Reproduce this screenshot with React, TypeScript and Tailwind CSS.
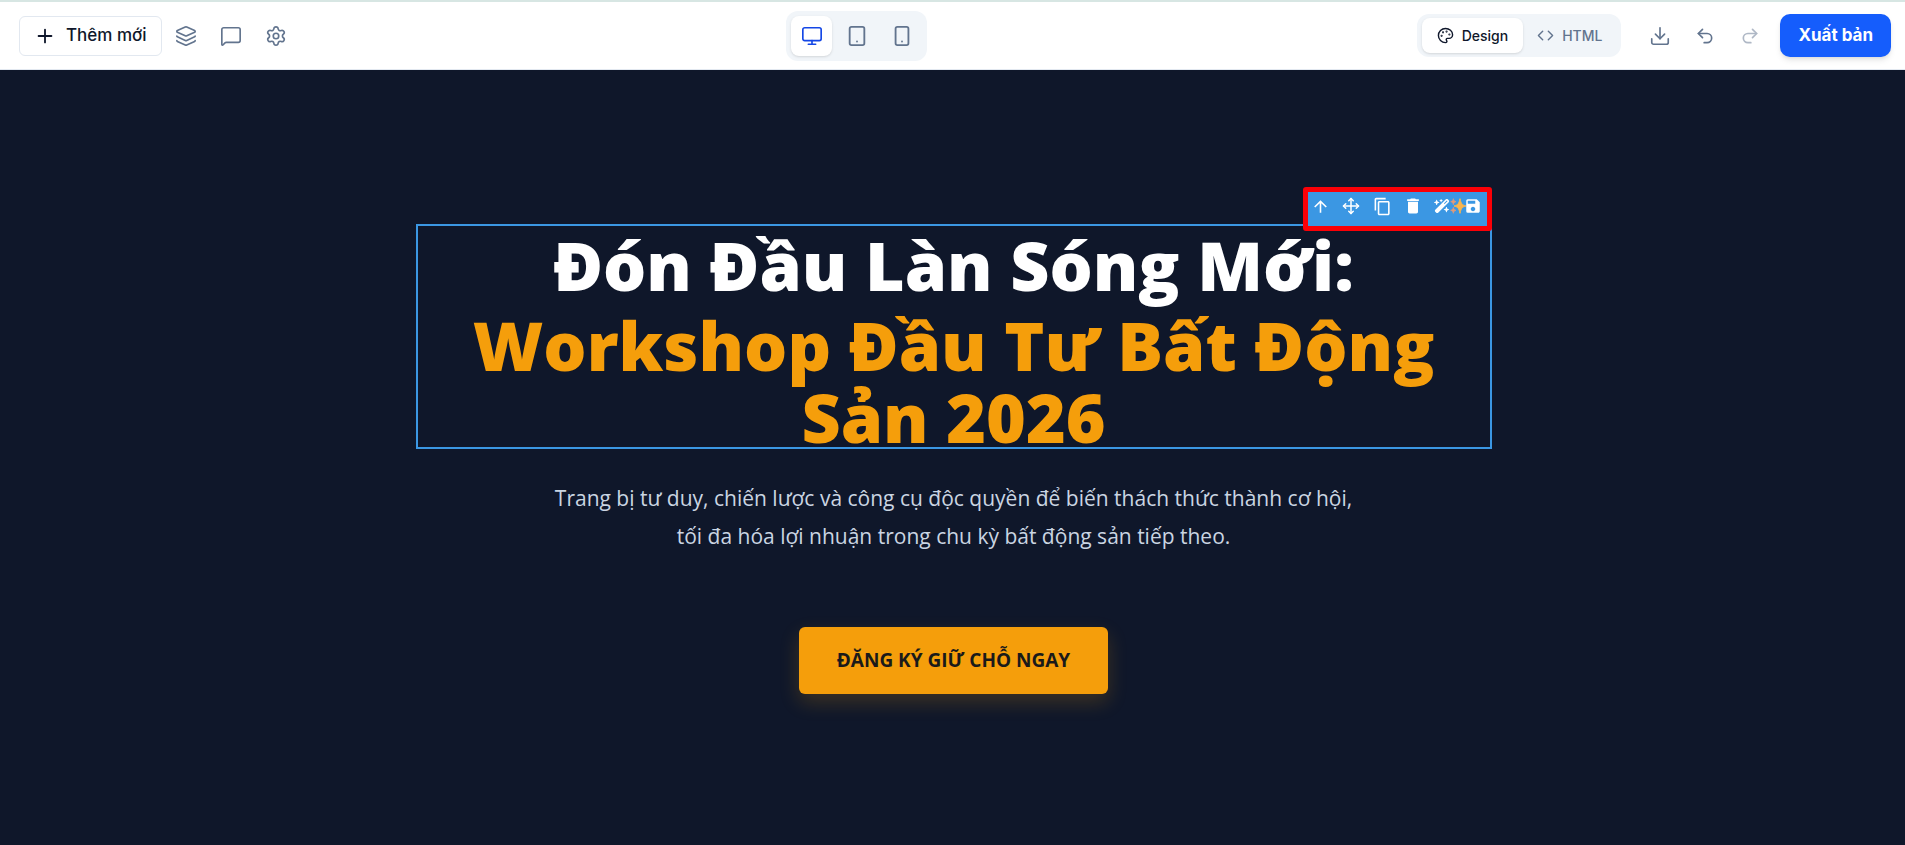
import type { ReactNode } from "react";
import {
  Code,
  Download,
  Layers,
  MessageSquare,
  Monitor,
  Move,
  Palette,
  Plus,
  Redo2,
  Settings,
  Tablet,
  Undo2,
} from "lucide-react";
import { FaWandMagicSparkles } from "react-icons/fa6";
import { MdArrowUpward, MdContentCopy, MdDelete, MdSave } from "react-icons/md";

function IconButton({ label, className = "text-slate-500", children }: { label: string; className?: string; children: ReactNode }) {
  return (
    <button type="button" aria-label={label} className={`flex h-10 w-[41px] items-center justify-center ${className}`}>
      {children}
    </button>
  );
}

function Sparkles() {
  return (
    <svg viewBox="0 0 24 24" className="h-4 w-4 shrink-0" aria-hidden="true">
      <path d="M15 1c1.700 7.500 3 9.500 9 11-6 1.500-7.300 3.500-9 11-1.700-7.500-3-9.500-9-11 6-1.500 7.300-3.500 9-11z" fill="#fbb54c" stroke="#fbb54c" strokeWidth="1.500" />
      <path d="M5 1c.8 3 1.200 3.500 4 4.500-2.800 1-3.200 1.500-4 4.500-.8-3-1.200-3.500-4-4.500C3.800 4.500 4.200 4 5 1z" fill="#e39a78" stroke="#e39a78" />
      <path d="M5 14c.8 3 1.200 3.500 4 4.500-2.800 1-3.200 1.500-4 4.500-.8-3-1.200-3.500-4-4.500 2.800-1 3.200-1.500 4-4.500z" fill="#e39a78" stroke="#e39a78" />
    </svg>
  );
}

function TopBar() {
  return (
    <header className="flex h-[68px] items-center justify-between border-b border-slate-200 bg-white pr-[14px] pl-[19px] font-['Inter',sans-serif]">
      <div className="flex items-center gap-1">
        <button type="button" className="flex h-10 items-center gap-[10px] rounded-md border border-slate-200 px-[14px] text-[17px] font-medium text-slate-900">
          <Plus size={22} strokeWidth={2} />
          Thêm mới
        </button>
        <IconButton label="Lớp"><Layers size={22} strokeWidth={1.8} /></IconButton>
        <IconButton label="Bình luận"><MessageSquare size={22} strokeWidth={1.8} /></IconButton>
        <IconButton label="Cài đặt"><Settings size={22} strokeWidth={1.8} /></IconButton>
      </div>

      <div className="flex items-center gap-1 rounded-xl bg-slate-100 p-[5px]">
        <IconButton label="Máy tính" className="rounded-lg bg-white text-blue-700 shadow"><Monitor size={22} strokeWidth={1.8} /></IconButton>
        <IconButton label="Máy tính bảng"><Tablet size={22} strokeWidth={2} /></IconButton>
        <IconButton label="Điện thoại">
          <svg viewBox="0 0 24 24" className="h-[22px] w-[22px]" fill="none" stroke="currentColor" strokeWidth="2" strokeLinecap="round" aria-hidden="true">
            <rect x="5" y="2" width="14" height="20" rx="2" />
            <path d="M12 18h.01" />
          </svg>
        </IconButton>
      </div>

      <div className="flex items-center">
        <div className="flex items-center rounded-xl bg-slate-100 px-[5px] py-1 text-sm font-medium">
          <button type="button" className="flex h-[35px] items-center gap-2 rounded-lg bg-white px-[15px] text-slate-900 shadow">
            <Palette size={17} strokeWidth={2} />
            Design
          </button>
          <button type="button" className="flex h-[35px] items-center gap-2 px-[14px] text-slate-500">
            <Code size={17} strokeWidth={2} />
            HTML
          </button>
        </div>
        <div className="flex items-center gap-1 pr-[10px] pl-[18px]">
          <IconButton label="Tải xuống"><Download size={22} strokeWidth={1.8} /></IconButton>
          <IconButton label="Hoàn tác"><Undo2 size={20} strokeWidth={2} /></IconButton>
          <IconButton label="Làm lại" className="text-slate-500 opacity-50"><Redo2 size={20} strokeWidth={2} /></IconButton>
        </div>
        <button type="button" className="h-[43px] rounded-[10px] bg-[#155dfc] px-[18px] text-[17px] font-bold text-white shadow-md">
          Xuất bản
        </button>
      </div>
    </header>
  );
}

const tools = [
  { label: "Chọn phần tử cha", icon: <MdArrowUpward size={19} /> },
  { label: "Di chuyển", icon: <Move size={18} strokeWidth={2} /> },
  { label: "Nhân bản", icon: <MdContentCopy size={19} /> },
  { label: "Xóa", icon: <MdDelete size={20} /> },
];

function ElementToolbar() {
  return (
    <div className="absolute right-0 bottom-full -mb-[7px] flex h-11 w-[189px] items-start gap-2 rounded-[3px] border-[5px] border-[#fb0007] bg-[#3b97e3] pt-1 pl-px text-white">
      {tools.map((tool) => (
        <button key={tool.label} type="button" aria-label={tool.label} className="flex h-5 w-[23px] items-center justify-center">
          {tool.icon}
        </button>
      ))}
      <div className="flex">
        <button type="button" aria-label="Chỉnh sửa bằng AI" className="flex h-5 items-center pl-px">
          <FaWandMagicSparkles size={16} />
          <Sparkles />
        </button>
        <button type="button" aria-label="Lưu" className="-ml-[2px] flex h-5 items-center">
          <MdSave size={18} />
        </button>
      </div>
    </div>
  );
}

export default function App() {
  return (
    <div className="flex min-h-screen flex-col border-t-2 border-[#d7e6e3] bg-[#0d1424]">
      <TopBar />
      <main className="flex flex-1 flex-col items-center bg-[#0f172a] pt-[154px] pr-6 pb-[140px] pl-[26px] text-center font-['Open_Sans','Noto_Sans',sans-serif]">
        <div className="relative w-full max-w-[1076px] outline-2 -outline-offset-2 outline-[#3b97e3]">
          <ElementToolbar />
          <h1 className="-mb-1 pt-[5px] text-[68px] leading-[72px] font-extrabold text-white">
            Đón Đầu Làn Sóng Mới:
            <span className="mt-2 block text-[#f59e0b]">Workshop Đầu Tư Bất Động Sản 2026</span>
          </h1>
        </div>
        <p className="mt-[30px] max-w-[800px] text-[21px] leading-[38px] text-slate-300">
          Trang bị tư duy, chiến lược và công cụ độc quyền để biến thách thức thành cơ hội, tối đa hóa lợi nhuận trong chu kỳ bất động sản tiếp theo.
        </p>
        <a href="#" className="mt-[72px] rounded-md bg-[#f59e0b] px-[38px] py-5 text-[19px] leading-[27px] font-bold text-[#1a1a1a] shadow-[0_8px_20px_rgba(245,158,11,0.2)]">
          ĐĂNG KÝ GIỮ CHỖ NGAY
        </a>
      </main>
    </div>
  );
}
